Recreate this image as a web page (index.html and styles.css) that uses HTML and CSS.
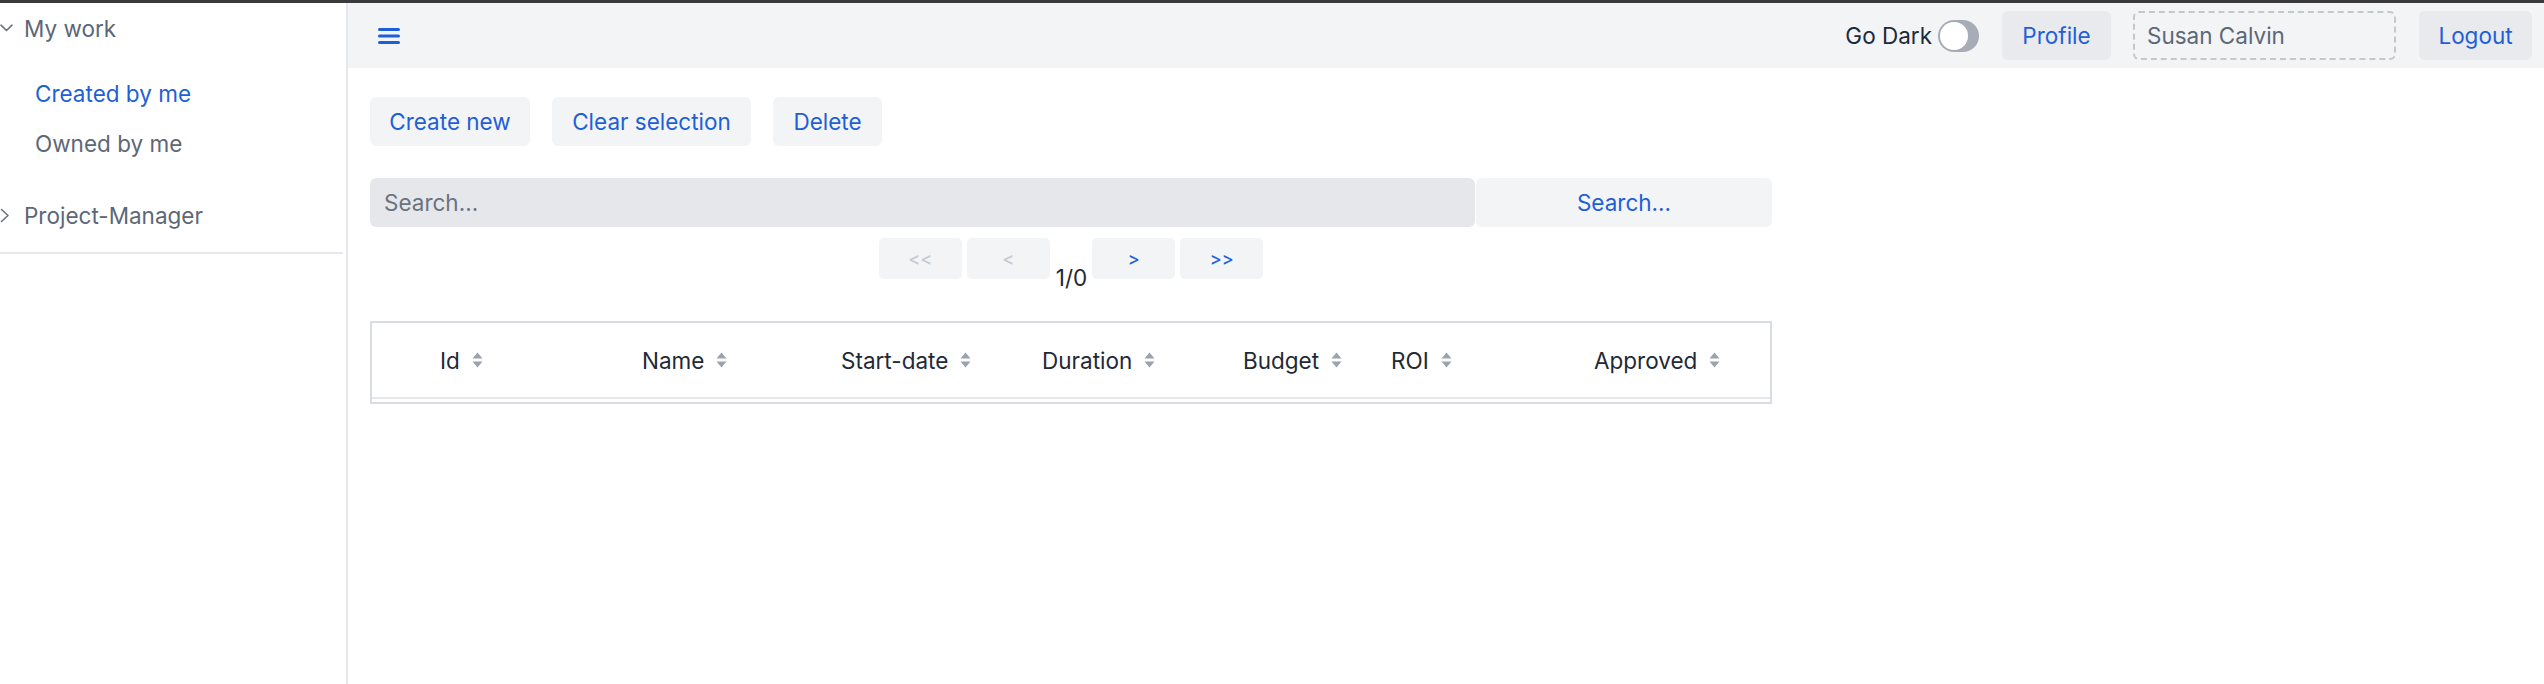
FILE: index.html
```html
<!DOCTYPE html>
<html lang="en">
<head>
<meta charset="utf-8">
<title>Projects</title>
<link rel="stylesheet" href="styles.css">
</head>
<body>
<div class="topbar"></div>
<div class="app">
  <aside class="sidebar">
    <div class="group-title">
      <svg class="chev" width="13" height="8" viewBox="0 0 13 8"><path d="M1 1.2 L6.5 6.5 L12 1.2" fill="none" stroke="#6b7280" stroke-width="1.6" stroke-linecap="round" stroke-linejoin="round"/></svg>
      <span>My work</span>
    </div>
    <ul class="sublist">
      <li class="active">Created by me</li>
      <li>Owned by me</li>
    </ul>
    <div class="group-title group-closed">
      <svg class="chev" width="13" height="15" viewBox="0 0 13 15"><path d="M1.5 1.5 L8 7.5 L1.5 13.5" fill="none" stroke="#6b7280" stroke-width="1.6" stroke-linecap="round" stroke-linejoin="round"/></svg>
      <span>Project-Manager</span>
    </div>
    <div class="divider"></div>
  </aside>
  <main class="main">
    <header class="navbar">
      <svg class="burger" width="22" height="16" viewBox="0 0 22 16"><rect x="0" y="0" width="22" height="3" rx="1.5" fill="#1e5fd8"/><rect x="0" y="6.5" width="22" height="3" rx="1.5" fill="#1e5fd8"/><rect x="0" y="13" width="22" height="3" rx="1.5" fill="#1e5fd8"/></svg>
      <div class="spacer"></div>
      <div class="dark-toggle">
        <span class="dark-label">Go Dark</span>
        <span class="switch"><span class="knob"></span></span>
      </div>
      <button class="nav-btn nav-profile">Profile</button>
      <div class="user-box">Susan Calvin</div>
      <button class="nav-btn nav-logout">Logout</button>
    </header>
    <section class="content">
      <div class="actions">
        <button class="btn btn-create">Create new</button>
        <button class="btn btn-clear">Clear selection</button>
        <button class="btn btn-delete">Delete</button>
      </div>
      <div class="search-row">
        <div class="search-input">Search...</div>
        <button class="search-btn">Search...</button>
      </div>
      <div class="pager">
        <button class="pg-btn disabled">&lt;&lt;</button>
        <button class="pg-btn disabled">&lt;</button>
        <span class="pg-count">1/0</span>
        <button class="pg-btn">&gt;</button>
        <button class="pg-btn">&gt;&gt;</button>
      </div>
      <div class="table">
        <div class="thead">
          <div class="th th-check"></div>
          <div class="th">Id<svg class="sort" width="11" height="16" viewBox="0 0 11 16"><path d="M0.5 6.5 L5.5 0.5 L10.5 6.5 Z" fill="#9ca3af"/><path d="M0.5 9.5 L5.5 15.5 L10.5 9.5 Z" fill="#9ca3af"/></svg></div>
          <div class="th">Name<svg class="sort" width="11" height="16" viewBox="0 0 11 16"><path d="M0.5 6.5 L5.5 0.5 L10.5 6.5 Z" fill="#9ca3af"/><path d="M0.5 9.5 L5.5 15.5 L10.5 9.5 Z" fill="#9ca3af"/></svg></div>
          <div class="th">Start-date<svg class="sort" width="11" height="16" viewBox="0 0 11 16"><path d="M0.5 6.5 L5.5 0.5 L10.5 6.5 Z" fill="#9ca3af"/><path d="M0.5 9.5 L5.5 15.5 L10.5 9.5 Z" fill="#9ca3af"/></svg></div>
          <div class="th">Duration<svg class="sort" width="11" height="16" viewBox="0 0 11 16"><path d="M0.5 6.5 L5.5 0.5 L10.5 6.5 Z" fill="#9ca3af"/><path d="M0.5 9.5 L5.5 15.5 L10.5 9.5 Z" fill="#9ca3af"/></svg></div>
          <div class="th">Budget<svg class="sort" width="11" height="16" viewBox="0 0 11 16"><path d="M0.5 6.5 L5.5 0.5 L10.5 6.5 Z" fill="#9ca3af"/><path d="M0.5 9.5 L5.5 15.5 L10.5 9.5 Z" fill="#9ca3af"/></svg></div>
          <div class="th">ROI<svg class="sort" width="11" height="16" viewBox="0 0 11 16"><path d="M0.5 6.5 L5.5 0.5 L10.5 6.5 Z" fill="#9ca3af"/><path d="M0.5 9.5 L5.5 15.5 L10.5 9.5 Z" fill="#9ca3af"/></svg></div>
          <div class="th">Approved<svg class="sort" width="11" height="16" viewBox="0 0 11 16"><path d="M0.5 6.5 L5.5 0.5 L10.5 6.5 Z" fill="#9ca3af"/><path d="M0.5 9.5 L5.5 15.5 L10.5 9.5 Z" fill="#9ca3af"/></svg></div>
        </div>
        <div class="tbody"></div>
      </div>
    </section>
  </main>
</div>
</body>
</html>
```

FILE: styles.css
```css
* { box-sizing: border-box; }

html, body {
  margin: 0;
  padding: 0;
  background: #ffffff;
}

body {
  font-family: Inter, "Liberation Sans", "Noto Sans", sans-serif;
  font-size: 22.5px;
  color: #1f2937;
  width: 2544px;
  height: 684px;
  overflow: hidden;
}

button {
  font-family: inherit;
  font-size: 22.5px;
  border: 0;
  margin: 0;
  padding: 0;
  cursor: pointer;
}

.topbar {
  height: 3px;
  background: #3a3a3c;
}

.app {
  display: flex;
  height: 681px;
}

/* Sidebar */
.sidebar {
  width: 348px;
  flex-shrink: 0;
  border-right: 2px solid #e5e7eb;
  color: #5c6778;
}

.group-title {
  height: 50px;
  display: flex;
  align-items: center;
}

.group-title .chev {
  width: 13px;
  margin-right: 11px;
  flex-shrink: 0;
}

.group-closed {
  margin-top: 21px;
}

.sublist {
  list-style: none;
  margin: 0;
  padding: 16px 0 0 35px;
}

.sublist li {
  height: 50px;
  line-height: 50px;
}

.sublist li.active {
  color: #1e5fd8;
}

.divider {
  margin: 12px 3px 0 0;
  height: 2px;
  background: #e5e7eb;
}

/* Main */
.main {
  flex: 1;
  min-width: 0;
}

.navbar {
  height: 65px;
  background: #f3f4f6;
  display: flex;
  align-items: center;
  padding: 0 12px 0 30px;
}

.burger {
  display: block;
}

.spacer {
  flex: 1;
}

.dark-toggle {
  display: flex;
  align-items: center;
  gap: 6px;
  color: #1f2937;
}

.switch {
  width: 41px;
  height: 32px;
  border-radius: 16px;
  background: #a7acb6;
  display: flex;
  align-items: center;
  padding-left: 2px;
}

.knob {
  width: 28px;
  height: 28px;
  border-radius: 50%;
  background: #ffffff;
}

.nav-btn {
  height: 49px;
  border-radius: 6px;
  background: #e8eaee;
  color: #1e5fd8;
  margin-left: 23px;
}

.nav-profile { width: 109px; }
.nav-logout { width: 113px; }

.user-box {
  width: 263px;
  height: 49px;
  margin-left: 22px;
  border: 2px dashed #c3c7ce;
  border-radius: 6px;
  padding-left: 12px;
  display: flex;
  align-items: center;
  color: #5c6778;
}

/* Content */
.content {
  padding: 29px 0 0 22px;
  width: 1424px;
}

.actions {
  display: flex;
  gap: 22px;
}

.btn {
  height: 49px;
  border-radius: 6px;
  background: #f3f4f6;
  color: #1e5fd8;
}

.btn-create { width: 160px; }
.btn-clear { width: 199px; }
.btn-delete { width: 109px; }

.search-row {
  margin-top: 32px;
  display: flex;
  gap: 1px;
}

.search-input {
  width: 1105px;
  height: 49px;
  background: #e5e7eb;
  border-radius: 6px;
  padding-left: 14px;
  display: flex;
  align-items: center;
  color: #6b7280;
}

.search-btn {
  flex: 1;
  height: 49px;
  border-radius: 6px;
  background: #f3f4f6;
  color: #1e5fd8;
}

.pager {
  margin-top: 11px;
  display: flex;
  justify-content: center;
  align-items: flex-start;
  gap: 5px;
}

.pg-btn {
  width: 83px;
  height: 41px;
  border-radius: 5px;
  background: #f3f4f6;
  color: #1e5fd8;
  font-size: 18px;
  font-weight: 500;
}

.pg-btn.disabled {
  color: #c4c8cf;
}

.pg-count {
  padding: 29px 0 0 1px;
  line-height: 22px;
  color: #1f2937;
}

.table {
  margin-top: 32px;
  border: 2px solid #d9dce1;
}

.thead {
  display: grid;
  grid-template-columns: 47px 202px 199px 201px 201px 148px 203px 197px;
  height: 76px;
  border-bottom: 2px solid #e5e7eb;
}

.th {
  display: flex;
  align-items: center;
  padding-left: 21px;
  color: #1f2937;
}

.th-check {
  padding: 0;
}

.sort {
  margin-left: 12px;
  flex-shrink: 0;
}

.tbody {
  height: 3px;
}
```
